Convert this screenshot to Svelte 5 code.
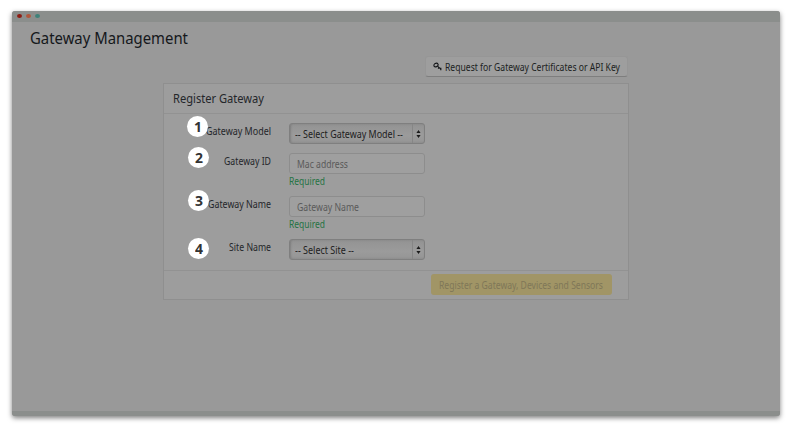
<script>
  const fields = [
    { n: 1, label: 'Gateway Model', w: 65, type: 'select', text: '-- Select Gateway Model --', tw: 108 },
    { n: 2, label: 'Gateway ID', w: 47, type: 'input', text: 'Mac address', tw: 51 },
    { n: 3, label: 'Gateway Name', w: 63, type: 'input', text: 'Gateway Name', tw: 62 },
    { n: 4, label: 'Site Name', w: 42, type: 'select', text: '-- Select Site --', tw: 59 }
  ];

  // Condenses a run of text horizontally to the given width.
  function fit(node, width) {
    const natural = node.getBoundingClientRect().width;
    node.style.transform = `scaleX(${width / natural})`;
  }
</script>

{#snippet run(text, width)}
  <span class="run" style:width="{width}px"><span class="glyphs" use:fit={width}>{text}</span></span>
{/snippet}

<div class="page">
  <div class="window">
    <div class="bar"><i class="red"></i><i class="orange"></i><i class="teal"></i></div>
    <main>
      <h1>{@render run('Gateway Management', 158)}</h1>
      <div class="content">
        <button class="request">
          <svg width="9" height="9" viewBox="0 0 9 9" fill="none" stroke="#141619">
            <ellipse cx="3" cy="3" rx="2.2" ry="1.7" stroke-width="1.1" transform="rotate(-30 3 3)" />
            <path d="M4.4 4.1L8.2 7.4M6.2 5.4L5.1 6.6M7.8 5.8V8.3" stroke-width="1.2" />
          </svg>
          {@render run('Request for Gateway Certificates or API Key', 175)}
        </button>
        <section class="panel">
          <h2>{@render run('Register Gateway', 91)}</h2>
          <div class="form">
            {#each fields as f}
              <div class="row r{f.n}">
                <span class="badge">{@render run(f.n, 8)}</span>
                <span class="label">{@render run(f.label, f.w)}</span>
                <div class="control">
                  <div class={f.type}>
                    {@render run(f.text, f.tw)}
                    {#if f.type === 'select'}
                      <span class="arrows">
                        <svg width="5" height="8" viewBox="0 0 5 8" fill="#1c1c1c"><path d="M2.5 0L4.6 3H.4zM2.5 8L4.6 5H.4z" /></svg>
                      </span>
                    {/if}
                  </div>
                  {#if f.type === 'input'}<div class="required">{@render run('Required', 36)}</div>{/if}
                </div>
              </div>
            {/each}
          </div>
          <footer><button class="register">{@render run('Register a Gateway, Devices and Sensors', 164)}</button></footer>
        </section>
      </div>
    </main>
    <div class="base"></div>
  </div>
</div>

<style>
  :global(body) { background: #fff; }
  * { box-sizing: border-box; }
  .page { width: 792px; height: 428px; padding: 11px 12px 12px; overflow: hidden; font: 10px/14px "Noto Sans", "Open Sans", sans-serif; color: #24262a; }
  .window { height: 405px; display: flex; flex-direction: column; background: #999; border-radius: 3px; box-shadow: 0 2px 5px rgba(0, 0, 0, .5); overflow: hidden; }
  .bar { height: 11px; flex: none; background: #8b8e8c; display: flex; gap: 4px; padding: 3px 0 0 5px; }
  .bar i { width: 5px; height: 4px; border-radius: 50%; }
  .red { background: #8f1c12; }
  .orange { background: #b2563b; }
  .teal { background: #3f8279; }
  .base { height: 5px; background: #8b8e8c; flex: none; }
  main { flex: 1; padding: 5px 0 0 18px; }
  .run { display: inline-block; white-space: nowrap; flex: none; text-align: left; }
  .glyphs { display: inline-block; transform-origin: 0 50%; }
  h1, h2 { margin: 0; font-weight: 400; display: flex; }
  h1 { font-size: 16px; line-height: 22px; color: #15181c; }
  .content { width: 465px; margin: 7px 0 0 133px; display: flex; flex-direction: column; align-items: flex-end; }
  button { font: inherit; color: inherit; border: 0; display: flex; align-items: center; }
  .request { width: 203px; height: 21px; padding: 0 0 0 7px; gap: 3px; background: #9e9e9e; border: 1px solid #969696; border-bottom-color: #7e7e7e; border-radius: 3px; color: #1c1e22; }
  .panel { width: 466px; height: 217px; margin: 6px -1px 0 0; border: 1px solid #8f8f8f; background: #9d9d9d; }
  h2 { height: 30px; padding: 0 0 0 9px; align-items: center; font-size: 12px; line-height: 16px; border-bottom: 1px solid #929292; }
  .form { height: 156px; padding-top: 9px; }
  .row { display: flex; align-items: flex-start; }
  .r1 { height: 30px; }
  .r2, .r3 { height: 43px; }
  .badge { width: 21px; height: 21px; margin-left: 24px; border-radius: 50%; background: #fff; color: #333; font-weight: 700; font-size: 15px; line-height: 20px; display: flex; justify-content: center; position: relative; z-index: 1; top: -1px; }
  .r1 .badge { margin-left: 23px; top: -7px; }
  .r2 .badge, .r3 .badge { top: -6px; }
  .label { flex: none; width: 62px; display: flex; justify-content: flex-end; padding-top: 1px; }
  .r1 .label { width: 63px; }
  .control { margin-left: 18px; width: 136px; }
  .select, .input { height: 21px; width: 136px; border-radius: 3px; display: flex; align-items: center; }
  .select { border: 1px solid #7f7f7f; background: linear-gradient(#939393, #9b9b9b 60%, #959595); box-shadow: inset 1px 0 2px rgba(0, 0, 0, .16); padding-left: 5px; color: #202020; }
  .arrows { width: 12px; height: 100%; margin-left: auto; border-left: 1px solid #868686; display: flex; align-items: center; justify-content: center; }
  .input { border: 1px solid #8d8d8d; background: #9f9f9f; padding-left: 7px; color: #5a5a5a; }
  .required { color: #257343; line-height: 14px; display: flex; }
  footer { border-top: 1px solid #929292; height: 29px; display: flex; justify-content: flex-end; padding: 3px 16px 0 0; }
  .register { width: 181px; height: 21px; padding: 0 8px; background: #a19566; border-radius: 3px; color: #7f7758; }
</style>
